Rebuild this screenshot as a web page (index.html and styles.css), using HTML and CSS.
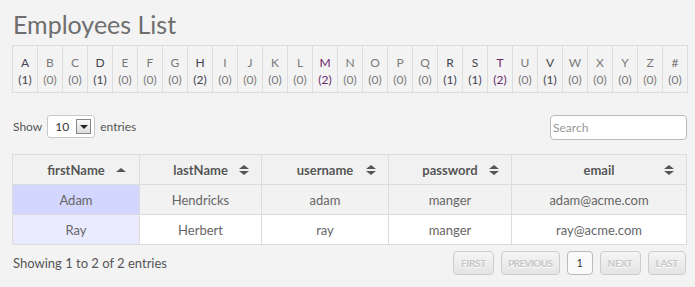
FILE: index.html
```html
<!DOCTYPE html>
<html lang="en">

<head>
  <meta charset="UTF-8">
  <meta name="viewport" content="width=device-width, initial-scale=1.0">
  <title>Employees List</title>
  <link rel="stylesheet" href="styles.css">
</head>

<body>
  <div class="page">
    <h1 class="title">Employees List</h1>

    <table class="alpha">
      <tr>
        <td class="has">A<br>(1)</td>
        <td>B<br>(0)</td>
        <td>C<br>(0)</td>
        <td class="has">D<br>(1)</td>
        <td>E<br>(0)</td>
        <td>F<br>(0)</td>
        <td>G<br>(0)</td>
        <td class="has">H<br>(2)</td>
        <td>I<br>(0)</td>
        <td>J<br>(0)</td>
        <td>K<br>(0)</td>
        <td>L<br>(0)</td>
        <td class="visited">M<br>(2)</td>
        <td>N<br>(0)</td>
        <td>O<br>(0)</td>
        <td>P<br>(0)</td>
        <td>Q<br>(0)</td>
        <td class="has">R<br>(1)</td>
        <td class="has">S<br>(1)</td>
        <td class="visited">T<br>(2)</td>
        <td>U<br>(0)</td>
        <td class="has">V<br>(1)</td>
        <td>W<br>(0)</td>
        <td>X<br>(0)</td>
        <td>Y<br>(0)</td>
        <td>Z<br>(0)</td>
        <td>#<br>(0)</td>
      </tr>
    </table>

    <div class="toolbar">
      <div class="length">
        Show
        <div class="select-box">
          <span>10</span>
          <span class="select-btn"></span>
        </div>
        entries
      </div>
      <input class="search" type="text" placeholder="Search">
    </div>

    <table class="grid">
      <colgroup>
        <col style="width:127px">
        <col style="width:122px">
        <col style="width:127px">
        <col style="width:123px">
        <col>
      </colgroup>
      <thead>
        <tr>
          <th class="asc">firstName</th>
          <th>lastName</th>
          <th>username</th>
          <th>password</th>
          <th>email</th>
        </tr>
      </thead>
      <tbody>
        <tr class="odd">
          <td class="sorted">Adam</td>
          <td>Hendricks</td>
          <td>adam</td>
          <td>manger</td>
          <td>adam@acme.com</td>
        </tr>
        <tr class="even">
          <td class="sorted">Ray</td>
          <td>Herbert</td>
          <td>ray</td>
          <td>manger</td>
          <td>ray@acme.com</td>
        </tr>
      </tbody>
    </table>

    <div class="footer">
      <div class="info">Showing 1 to 2 of 2 entries</div>
      <div class="paging">
        <span class="btn off">First</span>
        <span class="btn off prev">Previous</span>
        <span class="btn current">1</span>
        <span class="btn off">Next</span>
        <span class="btn off">Last</span>
      </div>
    </div>
  </div>
</body>

</html>
```

FILE: styles.css
```css
* {
  margin: 0;
  padding: 0;
  box-sizing: border-box;
}

body {
  background: #f3f3f3;
  font-family: Lato, "Open Sans", sans-serif;
  color: #666;
  font-size: 13px;
}

.page {
  padding: 9px 8px 0 12px;
}

.title {
  font-weight: normal;
  font-size: 25px;
  line-height: 30px;
  color: #6e6e6e;
  margin-left: 1px;
  height: 36px;
}

.alpha {
  width: 676px;
  border-collapse: collapse;
  border: 1px solid #ddd;
}

.alpha td {
  border: 1px solid #ddd;
  text-align: center;
  font-size: 12px;
  line-height: 17px;
  height: 47px;
  padding: 3px 0 0;
  color: #7a7a7a;
}

.alpha td.has {
  color: #44444f;
}

.alpha td.visited {
  color: #6a2a6a;
}

.toolbar {
  display: flex;
  justify-content: space-between;
  align-items: center;
  margin-top: 21px;
  height: 25px;
}

.length {
  display: flex;
  align-items: center;
  gap: 5px;
  font-size: 12px;
  color: #555;
  margin-left: 1px;
  margin-top: -1px;
}

.select-box {
  display: flex;
  align-items: center;
  justify-content: space-between;
  width: 48px;
  height: 23px;
  border: 1px solid #c8c8c8;
  border-radius: 3px;
  background: #fff;
  padding: 0 3px 0 7px;
  color: #333;
  font-size: 12px;
}

.select-btn {
  width: 15px;
  height: 15px;
  border: 1px solid #888;
  background: linear-gradient(#fafafa, #ddd);
  position: relative;
}

.select-btn::after {
  content: "";
  position: absolute;
  left: 3px;
  top: 5px;
  border-left: 4px solid transparent;
  border-right: 4px solid transparent;
  border-top: 4px solid #222;
}

.search {
  width: 137px;
  height: 25px;
  border: 1px solid #bbb;
  border-radius: 4px;
  background: #fff;
  padding: 0 2px;
  font-family: Lato, "Open Sans", sans-serif;
  font-size: 12px;
  margin-top: 2px;
}

.search::placeholder {
  color: #999;
}

.grid {
  width: 675px;
  margin-top: 15px;
  border-collapse: collapse;
  table-layout: fixed;
}

.grid th,
.grid td {
  border: 1px solid #dcdcdc;
  height: 30px;
  text-align: center;
  font-size: 13px;
}

.grid th {
  position: relative;
  background: #f1f1f1;
  color: #555;
  font-weight: bold;
  text-shadow: 0 1px 0 #fff;
}

/* sort arrows: up and down triangles */
.grid th::before,
.grid th::after {
  content: "";
  position: absolute;
  right: 12px;
  width: 0;
  height: 0;
  border-left: 5px solid transparent;
  border-right: 5px solid transparent;
}

.grid th::before {
  top: 10px;
  border-bottom: 4px solid #555;
}

.grid th::after {
  top: 16px;
  border-top: 4px solid #555;
}

.grid th.asc::before {
  top: 13px;
  right: 13px;
}

.grid th.asc::after {
  display: none;
}

.grid td {
  color: #666;
}

.grid tr.odd td {
  background: #f2f2f2;
}

.grid tr.even td {
  background: #fff;
}

.grid tr.odd td.sorted {
  background: #d3d6ff;
}

.grid tr.even td.sorted {
  background: #eaebff;
}

.footer {
  display: flex;
  justify-content: space-between;
  align-items: center;
  margin-top: 6px;
  padding-right: 1px;
}

.info {
  font-size: 13px;
  color: #555;
  margin-left: 1px;
  margin-top: -1px;
}

.paging {
  display: flex;
  gap: 7px;
}

.btn {
  display: inline-block;
  height: 24px;
  line-height: 22px;
  padding: 0 7px;
  border: 1px solid #ccc;
  border-radius: 4px;
  background: linear-gradient(#f5f5f5, #e4e4e4);
  font-size: 10px;
  font-weight: bold;
  text-transform: uppercase;
  letter-spacing: -0.3px;
}

.btn.prev {
  letter-spacing: -0.6px;
  padding: 0 6px;
}

.btn.off {
  color: #c6c6c6;
  text-shadow: 0 1px 0 #fff;
}

.btn.current {
  background: #fafafa;
  border-color: #bbb;
  color: #333;
  font-weight: normal;
  font-size: 11px;
  padding: 0 9px;
}
```
